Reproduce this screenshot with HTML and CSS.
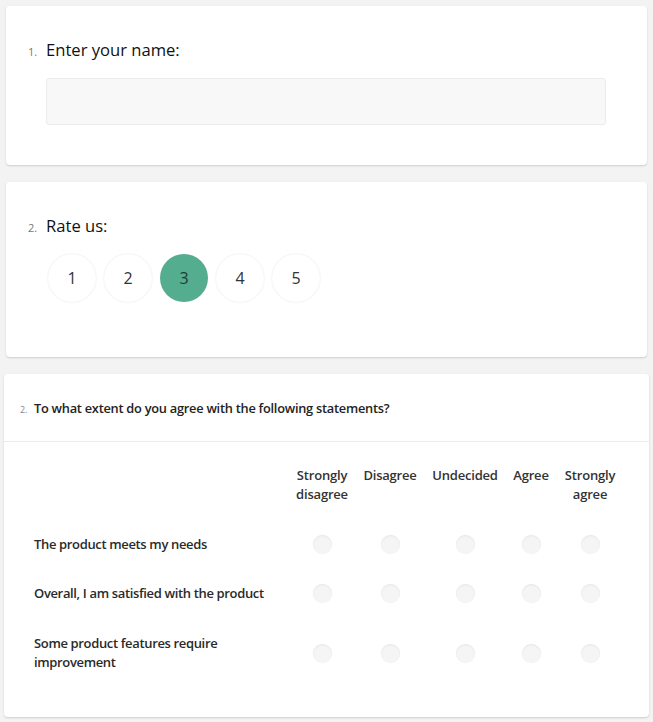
FILE: index.html
```html
<!DOCTYPE html>
<html>
<head>
<meta charset="utf-8">
<link rel="stylesheet" href="styles.css">
</head>
<body>
<div class="page">
  <section class="card card-name">
    <h2 class="q-title"><span class="q-num">1.</span>Enter your name:</h2>
    <div class="text-input"></div>
  </section>

  <section class="card card-rate">
    <h2 class="q-title"><span class="q-num">2.</span>Rate us:</h2>
    <div class="rating">
      <span class="rate-item">1</span>
      <span class="rate-item">2</span>
      <span class="rate-item selected">3</span>
      <span class="rate-item">4</span>
      <span class="rate-item">5</span>
    </div>
  </section>

  <section class="card card-matrix">
    <div class="matrix-head">
      <h2 class="m-title"><span class="m-num">2.</span>To what extent do you agree with the following statements?</h2>
    </div>
    <div class="matrix">
      <div class="m-cell m-label"></div>
      <div class="m-cell m-col">Strongly disagree</div>
      <div class="m-cell m-col">Disagree</div>
      <div class="m-cell m-col">Undecided</div>
      <div class="m-cell m-col">Agree</div>
      <div class="m-cell m-col">Strongly agree</div>

      <div class="m-cell m-label">The product meets my needs</div>
      <div class="m-cell m-radio"><span class="radio"></span></div>
      <div class="m-cell m-radio"><span class="radio"></span></div>
      <div class="m-cell m-radio"><span class="radio"></span></div>
      <div class="m-cell m-radio"><span class="radio"></span></div>
      <div class="m-cell m-radio"><span class="radio"></span></div>

      <div class="m-cell m-label">Overall, I am satisfied with the product</div>
      <div class="m-cell m-radio"><span class="radio"></span></div>
      <div class="m-cell m-radio"><span class="radio"></span></div>
      <div class="m-cell m-radio"><span class="radio"></span></div>
      <div class="m-cell m-radio"><span class="radio"></span></div>
      <div class="m-cell m-radio"><span class="radio"></span></div>

      <div class="m-cell m-label">Some product features require improvement</div>
      <div class="m-cell m-radio"><span class="radio"></span></div>
      <div class="m-cell m-radio"><span class="radio"></span></div>
      <div class="m-cell m-radio"><span class="radio"></span></div>
      <div class="m-cell m-radio"><span class="radio"></span></div>
      <div class="m-cell m-radio"><span class="radio"></span></div>
    </div>
  </section>
</div>
</body>
</html>
```

FILE: styles.css
```css
* { box-sizing: border-box; }
html, body { margin: 0; padding: 0; }
body {
  background: #f3f3f3;
  font-family: "Open Sans", "Noto Sans", sans-serif;
  color: #262626;
}
.page {
  padding: 6px;
  display: flex;
  flex-direction: column;
  gap: 17px;
}
.card {
  background: #fff;
  border-radius: 4px;
  box-shadow: 0 1px 2px rgba(0,0,0,0.16);
}
.card-name { height: 159px; padding: 33px 40px 0 40px; }
.card-rate { height: 175px; padding: 33px 40px 0 22px; }
.card-matrix { margin: 0 -2px; height: 343px; }

.q-title {
  margin: 0;
  font-size: 16.6px;
  font-weight: 400;
  line-height: 22px;
  display: flex;
  align-items: baseline;
  color: #111;
}
.card-name .q-title { margin-left: -18px; }
.q-num {
  font-size: 11px;
  color: #777;
  width: 18px;
}
.text-input {
  margin-top: 15px;
  height: 47px;
  width: 560px;
  background: #f8f8f8;
  border: 1px solid #ececec;
  border-radius: 3px;
}
.rating {
  display: flex;
  gap: 8px;
  margin: 15px 0 0 20px;
}
.rate-item {
  width: 48px;
  height: 48px;
  border-radius: 50%;
  display: flex;
  align-items: center;
  justify-content: center;
  font-size: 16px;
  color: #333;
  background: #fff;
  box-shadow: 0 0 2px rgba(0,0,0,0.12);
}
.rate-item.selected {
  background: #55ad8f;
  box-shadow: none;
  color: #1f3b31;
}

.matrix-head {
  padding: 25px 16px 0 16px;
  height: 68px;
  border-bottom: 1px solid #ececec;
}
.m-title {
  margin: 0;
  font-size: 12.8px;
  font-weight: 600;
  letter-spacing: -0.25px;
  line-height: 18px;
  color: #222;
  display: flex;
  align-items: baseline;
}
.m-num {
  font-size: 9px;
  font-weight: 400;
  color: #888;
  width: 14px;
}
.matrix {
  display: grid;
  grid-template-columns: 254px 68px 68px 82px 50px 68px;
  grid-template-rows: 54px 49px 49px 70px;
  padding: 24px 0 0 30px;
  font-size: 13px;
  color: #262626;
}
.m-cell {
  display: flex;
  align-items: center;
}
.m-col {
  align-items: flex-start;
  justify-content: center;
  text-align: center;
  line-height: 19px;
  font-weight: 600;
  letter-spacing: -0.2px;
  padding: 0 4px;
  color: #333;
}
.m-label {
  font-weight: 600;
  letter-spacing: -0.35px;
  line-height: 19px;
  padding-right: 22px;
  color: #2a2a2a;
}
.m-label:nth-last-child(6) { padding-bottom: 1px; }
.m-radio { justify-content: center; }
.radio {
  width: 19px;
  height: 19px;
  border-radius: 50%;
  background: #f5f5f5;
  box-shadow: inset 0 1px 2px rgba(0,0,0,0.06), 0 0 1px rgba(0,0,0,0.06);
}
```
